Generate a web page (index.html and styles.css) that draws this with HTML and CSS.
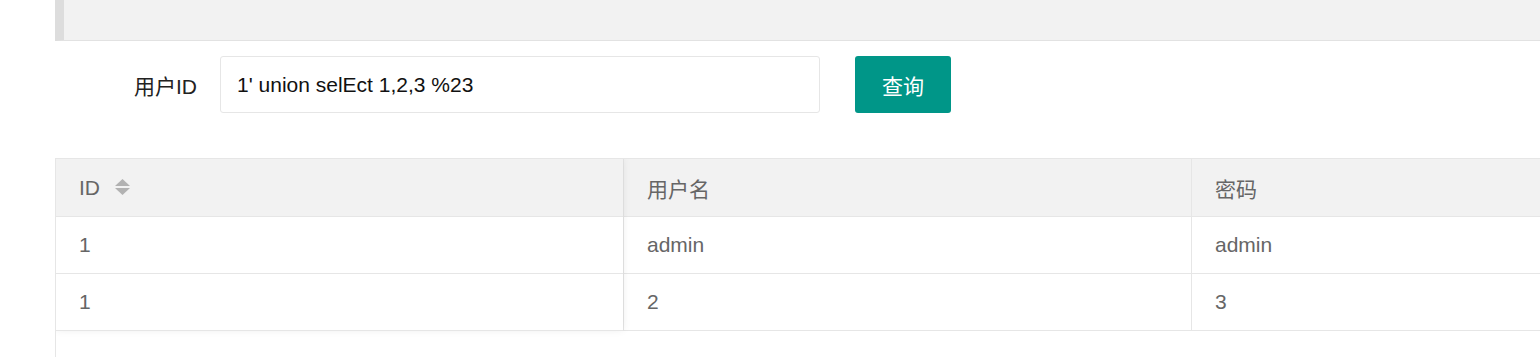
FILE: index.html
```html
<!DOCTYPE html>
<html lang="zh-CN">
<head>
    <meta charset="UTF-8">
    <title>用户查询</title>
    <link rel="stylesheet" href="styles.css">
</head>
<body>
    <div class="main">
        <div class="quote"></div>

        <form class="query-form" onsubmit="return false">
            <label class="form-label" for="userId">用户ID</label>
            <input id="userId" class="form-input" type="text" value="1' union selEct 1,2,3 %23">
            <button class="btn" type="submit">查询</button>
        </form>

        <div class="table-view">
            <div class="table-body">
                <div class="col col-fixed">
                    <div class="cell head">
                        <span>ID</span>
                        <svg class="sort" width="15" height="17" viewBox="0 0 15 17">
                            <polygon points="7.5,0 15,7 0,7" fill="#b2b2b2"/>
                            <polygon points="0,9 15,9 7.5,16" fill="#b2b2b2"/>
                        </svg>
                    </div>
                    <div class="cell">1</div>
                    <div class="cell">1</div>
                </div>
                <div class="col">
                    <div class="cell head">用户名</div>
                    <div class="cell">admin</div>
                    <div class="cell">2</div>
                </div>
                <div class="col">
                    <div class="cell head">密码</div>
                    <div class="cell">admin</div>
                    <div class="cell">3</div>
                </div>
            </div>
        </div>
    </div>
</body>
</html>
```

FILE: styles.css
```css
html, body {
    overflow: hidden;
}

body {
    margin: 0;
    font-family: 'Liberation Sans', 'Noto Sans CJK SC', sans-serif;
    font-size: 21px;
    color: #666;
    background-color: #fff;
}

.main {
    padding-left: 55px;
}

.quote {
    height: 40px;
    background-color: #f2f2f2;
    border-left: 9px solid #ddd;
    border-bottom: 1px solid #e2e2e2;
}

.query-form {
    display: flex;
    align-items: center;
    margin: 15px 0 45px;
}

.form-label {
    width: 165px;
    box-sizing: border-box;
    padding-right: 23px;
    text-align: right;
    color: #222;
}

.form-input {
    width: 600px;
    height: 57px;
    box-sizing: border-box;
    padding: 0 16px;
    border: 1px solid #e6e6e6;
    border-radius: 3px;
    font-family: inherit;
    font-size: 21px;
    color: #111;
    outline: none;
}

.btn {
    margin-left: 35px;
    width: 96px;
    height: 57px;
    border: none;
    border-radius: 3px;
    background-color: #009688;
    color: #fff;
    font-family: 'Noto Sans CJK SC', sans-serif;
    font-size: 21px;
    cursor: pointer;
}

.table-view {
    border-top: 1px solid #e6e6e6;
    border-left: 1px solid #e6e6e6;
    height: 198px;
    overflow: hidden;
}

.table-body {
    display: flex;
    width: 1704px;
}

.col {
    width: 568px;
    flex-shrink: 0;
}

    .col + .col .cell {
        border-left: 1px solid #e6e6e6;
    }

.col-fixed {
    width: 567px;
    position: relative;
    z-index: 2;
    background-color: #fff;
    box-shadow: 0 -1px 8px rgba(0, 0, 0, 0.08);
}

.cell {
    display: flex;
    align-items: center;
    height: 56px;
    padding-left: 23px;
    border-bottom: 1px solid #e6e6e6;
}

    .cell.head {
        height: 57px;
        background-color: #f2f2f2;
    }

.sort {
    margin-left: 15px;
}
```
